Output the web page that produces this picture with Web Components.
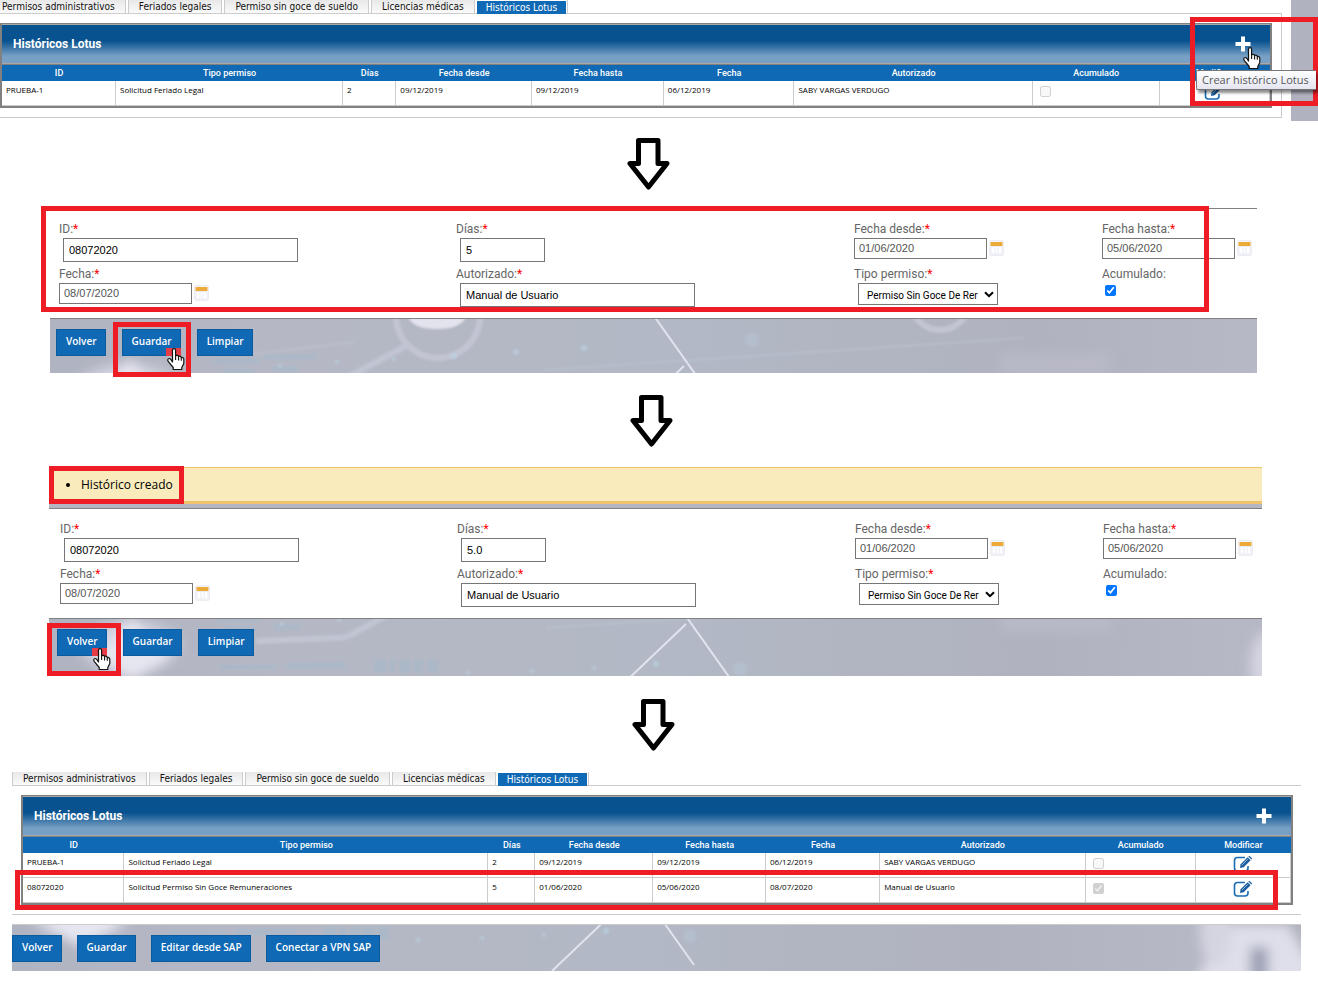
<!DOCTYPE html>
<html lang="es">
<head>
  <meta charset="utf-8">
  <title>Históricos Lotus</title>
  <style>
    body {
      margin: 0;
      background: #fff;
      color: #000;
      font-family: Roboto, "Open Sans", sans-serif;
      overflow-x: hidden;
    }
  </style>
</head>
<body>
  <list-screen clipped>
    <nav-tabs slot="tabs" clipped></nav-tabs>
    <history-table slot="table" layout="narrow"></history-table>
    <red-mark slot="overlay" style="--top: 17px; --right: 0px; --width: 118px; --height: 79px"></red-mark>
    <tool-tip slot="overlay">Crear histórico Lotus</tool-tip>
  </list-screen>

  <flow-arrow></flow-arrow>

  <form-screen days="5"></form-screen>

  <flow-arrow></flow-arrow>

  <form-screen days="5.0" saved></form-screen>

  <flow-arrow></flow-arrow>

  <list-screen>
    <nav-tabs slot="tabs"></nav-tabs>
    <history-table slot="table" layout="wide"></history-table>
    <action-bar slot="actions" view="list">
      <push-button>Volver</push-button>
      <push-button>Guardar</push-button>
      <push-button>Editar desde SAP</push-button>
      <push-button>Conectar a VPN SAP</push-button>
    </action-bar>
  </list-screen>

  <script>
    const records = [
      {
        id: "PRUEBA-1",
        type: "Solicitud Feriado Legal",
        days: "2",
        from: "09/12/2019",
        to: "09/12/2019",
        date: "06/12/2019",
        by: "SABY VARGAS VERDUGO",
        accumulated: false
      },
      {
        id: "08072020",
        type: "Solicitud Permiso Sin Goce Remuneraciones",
        days: "5",
        from: "01/06/2020",
        to: "05/06/2020",
        date: "08/07/2020",
        by: "Manual de Usuario",
        accumulated: true
      }
    ];

    // column widths in percent, per table layout
    const layouts = {
      narrow: { widths: [9, 17.9, 4.2, 10.7, 10.4, 10.3, 18.8, 10, 8.7], rows: 1 },
      wide: { widths: [8, 28.7, 3.7, 9.3, 8.9, 9, 16.2, 8.7, 7.5], rows: 2 }
    };

    const handIcon = `
      <svg width="19" height="24" viewBox="0 0 19 24" aria-hidden="true">
        <path d="M6.5 15V3.2C6.5 1 9.6 1 9.6 3.2V9C10.4 7.8 12.3 8.2 12.6 9.6C13.6 8.8 15.2 9.4 15.3 10.6C16.4 10 17.8 10.8 17.8 12.2V16.5L15.8 20.5V22.5H7.2V20.5L2.2 14.4C.8 12.2 2.8 10.6 4.6 12.2Z"
          fill="#fff" stroke="#111" stroke-width="1.2" stroke-linejoin="round"/>
        <path d="M9.6 9V13M12.6 10V13.4M15.3 11V13.8" stroke="#111" stroke-width="1.1"/>
      </svg>`;

    class RedMark extends HTMLElement {
      constructor() {
        super();
        this.attachShadow({ mode: "open" }).innerHTML = `
          <style>
            :host {
              display: block;
              position: absolute;
              top: var(--top);
              right: var(--right, auto);
              left: var(--left, auto);
              width: var(--width, auto);
              height: var(--height);
              border: 5px solid #ee1c24;
              pointer-events: none;
              z-index: 2;
            }
          </style>`;
      }
    }

    class ToolTip extends HTMLElement {
      constructor() {
        super();
        this.attachShadow({ mode: "open" }).innerHTML = `
          <style>
            :host {
              display: block;
              position: absolute;
              top: 70px;
              right: 2px;
              width: 114px;
              padding: 0 0 0 5px;
              border: 1px solid #767676;
              border-right: 0;
              border-radius: 2px 0 0 2px;
              background: linear-gradient(#fff, #e4e5f0);
              box-shadow: 2px 3px 3px rgba(0, 0, 0, .45);
              color: #575757;
              font: 11px/18px "Open Sans", sans-serif;
              white-space: nowrap;
              z-index: 3;
            }
            .hand {
              position: absolute;
              top: -25px;
              left: 45px;
              height: 24px;
            }
          </style>
          <slot></slot>
          <span class="hand">${handIcon}</span>`;
      }
    }

    class FlowArrow extends HTMLElement {
      constructor() {
        super();
        this.attachShadow({ mode: "open" }).innerHTML = `
          <style>
            :host {
              display: block;
              padding: 22px 16px 20px 0;
            }
            :host(:first-of-type) {
              padding: 17px 22px 18px 0;
            }
            :host(:last-of-type) {
              padding: 23px 12px 20px 0;
            }
            svg { display: block; margin: 0 auto; }
          </style>
          <svg width="43" height="52" viewBox="0 0 43 52" aria-hidden="true">
            <path d="M11.5 2.5H31V25.5H40L21.5 49 3 25.5H11.5Z" fill="#fff" stroke="#000" stroke-width="5" stroke-linejoin="round"/>
          </svg>`;
      }
    }

    class NavTabs extends HTMLElement {
      constructor() {
        super();
        const tabs = ["Permisos administrativos", "Feriados legales", "Permiso sin goce de sueldo", "Licencias médicas"];
        this.attachShadow({ mode: "open" }).innerHTML = `
          <style>
            :host { display: block; }
            nav {
              display: flex;
              gap: 2px;
              height: 13px;
              font: 10px/13px "DejaVu Sans Condensed", sans-serif;
            }
            a {
              padding: 0 10px;
              border: solid #ccc;
              border-width: 0 1px;
              background: linear-gradient(#e8e8e8, #fafafa);
              color: #111;
              text-decoration: none;
              white-space: nowrap;
            }
            :host([clipped]) nav > a:first-child {
              padding-left: 2px;
              border-left: 0;
            }
            .holder {
              padding: 1px 1px 0 0;
              border-right: 1px solid #ccc;
            }
            .active {
              display: block;
              padding: 0 9px;
              border: 0;
              background: #0f69b4;
              color: #fff;
            }
          </style>
          <nav>
            ${tabs.map(tab => `<a href="#">${tab}</a>`).join("")}
            <div class="holder"><a class="active" href="#" aria-current="page">Históricos Lotus</a></div>
          </nav>`;
      }
    }

    class HistoryTable extends HTMLElement {
      connectedCallback() {
        const { widths, rows } = layouts[this.getAttribute("layout")];
        const titles = ["ID", "Tipo permiso", "Días", "Fecha desde", "Fecha hasta", "Fecha", "Autorizado", "Acumulado", "Modificar"];
        this.attachShadow({ mode: "open" }).innerHTML = `
          <style>
            :host {
              display: block;
              position: relative;
              border: 2px solid #808080;
              border-top-width: 1px;
            }
            header {
              display: flex;
              align-items: center;
              justify-content: space-between;
              box-sizing: border-box;
              height: 40px;
              padding: 0 19px 0 11px;
              border: 1px solid #a9a9a9;
              border-width: 1px 0;
              background: linear-gradient(#08528f 42%, #78a0c5 82%);
              color: #fff;
            }
            h2 {
              margin: 0;
              font: bold 12px/16px Roboto, sans-serif;
            }
            button {
              padding: 0;
              border: 0;
              background: none;
              line-height: 0;
            }
            table {
              width: 100%;
              border-top: 1px solid #808080;
              border-spacing: 0;
              table-layout: fixed;
            }
            th {
              height: 16px;
              padding: 0;
              background: #0f69b4;
              color: #fff;
              font: 500 9px/16px Roboto, sans-serif;
            }
            td {
              box-sizing: border-box;
              height: 25px;
              padding: 4px 0 0 4px;
              border: solid #ccc;
              border-width: 0 1px 1px 0;
              vertical-align: top;
              font: 8px/10px "Open Sans", sans-serif;
              white-space: nowrap;
            }
            input {
              display: block;
              width: 11px;
              height: 11px;
              margin: 1px 0 0 3px;
            }
            .edit {
              padding: 2px 0 0;
              text-align: center;
            }
            .edit svg { display: block; margin: 0 auto; }
          </style>
          <header>
            <h2>Históricos Lotus</h2>
            <button type="button" aria-label="Crear histórico Lotus">
              <svg width="16" height="16" viewBox="0 0 16 16"><path d="M6 .5h4V6h5.500v4H10v5.500H6V10H.5V6H6Z" fill="#fff"/></svg>
            </button>
          </header>
          <table>
            <colgroup>${widths.map(width => `<col style="width: ${width}%">`).join("")}</colgroup>
            <thead><tr>${titles.map(title => `<th>${title}</th>`).join("")}</tr></thead>
            <tbody>${records.slice(0, rows).map(record => this.row(record)).join("")}</tbody>
          </table>
          ${rows > 1 ? `<red-mark style="--top: 74px; --left: -8px; --width: calc(100% - 15px); --height: 30px"></red-mark>` : ""}`;
      }

      row(record) {
        return `
          <tr>
            <td>${record.id}</td>
            <td>${record.type}</td>
            <td>${record.days}</td>
            <td>${record.from}</td>
            <td>${record.to}</td>
            <td>${record.date}</td>
            <td>${record.by}</td>
            <td><input type="checkbox" aria-label="Acumulado" disabled ${record.accumulated ? "checked" : ""}></td>
            <td class="edit">
              <button type="button" aria-label="Modificar">
                <svg width="20" height="18" viewBox="0 0 20 18" fill="none">
                  <path d="M12 2.500H4.500Q1.500 2.500 1.500 5.500V13Q1.500 16 4.500 16H12Q15 16 15 13V11" stroke="#1a6bb3" stroke-width="1.600"/>
                  <path d="M7 13 7.600 9.300 14.600 2.300 17.600 5.300 10.600 12.300Z" fill="#1a5c9e"/>
                  <path d="M15.300 1.600 16.300.8 19.200 3.600 18.300 4.600Z" fill="#1a5c9e"/>
                  <path d="M8.800 10.200 14.800 4.200" stroke="#b9d2ea" stroke-width=".8"/>
                </svg>
              </button>
            </td>
          </tr>`;
      }
    }

    class PushButton extends HTMLElement {
      constructor() {
        super();
        this.attachShadow({ mode: "open", delegatesFocus: true }).innerHTML = `
          <style>
            :host {
              display: block;
              position: relative;
            }
            button {
              display: block;
              height: 27px;
              padding: 0 8px 3px 9px;
              border: 1px solid #0b5a9e;
              background: #0f69b4;
              color: #fff;
              font: 600 10px/14px "Open Sans", sans-serif;
              white-space: nowrap;
            }
            .press {
              position: absolute;
              right: 0;
              bottom: 0;
              width: 15px;
              height: 8px;
              background: #e63c46;
              z-index: 3;
            }
            .press svg {
              position: absolute;
              top: -1px;
              left: 0;
            }
            red-mark {
              --top: -7px;
              --left: -9px;
              --width: calc(100% + 9px);
              --height: 45px;
            }
            :host([pressed="first"]) red-mark {
              --top: -6px;
              --left: -10px;
              --width: calc(100% + 14px);
              --height: 43px;
            }
          </style>
          <button type="button"><slot></slot></button>`;
      }

      connectedCallback() {
        if (this.hasAttribute("pressed")) {
          this.shadowRoot.innerHTML += `<span class="press">${handIcon}</span><red-mark></red-mark>`;
        }
      }
    }

    // One backdrop drawing seen through a different window in each bar;
    // its origin is the peak where the two long lines meet.
    const views = {
      form: "-634 -47 1207 54",
      saved: "-637 -5 1213 57",
      list: "-624 34 1289 46"
    };

    class ActionBar extends HTMLElement {
      connectedCallback() {
        const view = this.getAttribute("view");
        this.attachShadow({ mode: "open" }).innerHTML = `
          <style>
            :host {
              display: flex;
              align-items: flex-start;
              box-sizing: border-box;
              position: relative;
              gap: 16px;
              height: 55px;
              padding: 10px 6px 0;
              border-top: 1px solid #808080;
              background: #b3b6c3;
            }
            :host([view="saved"]) {
              height: 58px;
              padding-left: 8px;
            }
            :host([view="list"]) {
              gap: 15px;
              height: 47px;
              padding-left: 0;
              border-top-color: #ccc;
            }
            .scene {
              position: absolute;
              top: 0;
              left: 0;
              width: 100%;
              height: 100%;
            }
          </style>
          <svg class="scene" viewBox="${views[view]}" preserveAspectRatio="xMidYMid slice" aria-hidden="true">
            <defs>
              <linearGradient id="tone">
                <stop offset="0" stop-color="#aeb1bf"/>
                <stop offset=".2" stop-color="#b5b8c4"/>
                <stop offset=".5" stop-color="#b2b8c5"/>
                <stop offset=".75" stop-color="#b0b2bf"/>
                <stop offset=".9" stop-color="#b6b8c5"/>
                <stop offset="1" stop-color="#aeb0bc"/>
              </linearGradient>
              <filter id="soft" x="-50%" y="-50%" width="200%" height="200%"><feGaussianBlur stdDeviation="1"/></filter>
              <filter id="haze" x="-50%" y="-50%" width="200%" height="200%"><feGaussianBlur stdDeviation="6"/></filter>
            </defs>
            <rect x="-700" y="-100" width="1400" height="220" fill="url(#tone)"/>
            <g fill="none" filter="url(#soft)">
              <circle cx="-246" cy="-50" r="42" stroke="#c3c5d3" stroke-width="6"/>
              <circle cx="256" cy="-66" r="30" stroke="#c3c5d2" stroke-width="6"/>
              <path d="M-278-20-332 9Q-338 14-350 14L-430 17" stroke="#c1c4d2" stroke-width="6"/>
              <path d="M-430-12-330-24" stroke="#bcbfcc" stroke-width="2"/>
              <path d="M-140 4 340-28" stroke="#bcc7d3" stroke-width="1"/>
            </g>
            <path d="M-276-50H-218Q-222-37-247-37T-276-50Z" fill="#e3e3ed" filter="url(#soft)"/>
            <g filter="url(#haze)">
              <ellipse cx="-556" cy="22" rx="50" ry="24" fill="#d0d1df"/>
              <path d="M-592 36-554-8-516 36-554 56Z" fill="#e6e6f0"/>
              <path d="M556 100 586 34H652L690 100Z" fill="#dfdfea"/>
              <ellipse cx="580" cy="42" rx="16" ry="34" fill="#d5d4e1"/>
              <path d="M316-12H426V8H316Z" fill="#b9bac8"/>
              <path d="M614 56H632V90H614Z" fill="#9da1b5"/>
            </g>
            <g fill="#9fb9ce" opacity=".4" filter="url(#soft)">
              <path d="M-470-8h45v6h-45zM-420-12h52v6h-52zM-460 2h30v5h-30zM-412 0h26v6h-26z"/>
              <path d="M-466 40h56v6h-56zM-400 38h60v7h-60zM-312 36h12v12h-12zM-296 36h5v12h-5zM-286 36h10v12h-10zM-272 36h9v12h-9zM-258 36h10v12h-10z"/>
            </g>
            <g fill="#bcd5e6" opacity=".6" filter="url(#soft)">
              <circle cx="-404" cy="0" r="2"/><circle cx="-347" cy="-4" r="2"/><circle cx="-290" cy="-7" r="2"/>
              <circle cx="-230" cy="-10" r="3"/><circle cx="-168" cy="-14" r="3"/><circle cx="-100" cy="-18" r="3"/>
              <circle cx="-218" cy="49" r="2"/><circle cx="-154" cy="47" r="2"/><circle cx="-92" cy="44" r="2"/>
              <circle cx="-30" cy="40" r="3"/><circle cx="54" cy="45" r="7" opacity=".4"/><circle cx="68" cy="-26" r="7" opacity=".4"/>
            </g>
            <path d="M-30-50 58 74M0 0-84 80" fill="none" stroke="#e2e3ee" stroke-width="2"/>
          </svg>
          <slot></slot>`;
      }
    }

    class FormField extends HTMLElement {
      connectedCallback() {
        const kind = this.getAttribute("kind");
        const value = this.getAttribute("value");
        const controls = {
          text: `<input id="control" class="text" type="text" value="${value}">`,
          short: `<input id="control" class="text short" type="text" value="${value}">`,
          date: `<input id="control" class="date" type="text" value="${value}">
            <svg width="15" height="16" viewBox="0 0 15 16" aria-hidden="true">
              <rect x=".5" y=".5" width="14" height="15" rx="1.500" fill="#f6f7fa" stroke="#ececf2"/>
              <path d="M1.500 2h12V6h-12z" fill="#ecaa38"/>
              <path d="M2 6.500h11V14h-11zM6 7v7M9 7v7" fill="#fff" stroke="#e8ebf2"/>
            </svg>`,
          select: `<span class="pick">
              <select id="control"><option>${value}</option></select>
              <svg width="10" height="7" viewBox="0 0 10 7" aria-hidden="true"><path d="M1 1.200 5 5.200 9 1.200" fill="none" stroke="#000" stroke-width="2"/></svg>
            </span>`,
          check: `<input id="control" class="check" type="checkbox" checked>`
        };
        this.attachShadow({ mode: "open" }).innerHTML = `
          <style>
            :host {
              display: block;
              height: 45px;
            }
            label {
              display: block;
              height: 20px;
              color: #666;
              font-size: 12px;
              line-height: 22px;
            }
            i { color: #f00; font-style: normal; }
            .line { display: flex; gap: 2px; }
            input, select {
              box-sizing: border-box;
              margin: 0;
              border: 1px solid #767676;
              border-radius: 0;
              background: #fff;
              color: #000;
              font: 11px "Liberation Sans", sans-serif;
            }
            .text {
              width: 235px;
              height: 24px;
              margin-left: 4px;
              padding: 1px 5px;
            }
            .short { width: 85px; }
            .date {
              width: 133px;
              height: 21px;
              padding: 0 4px 2px;
              color: #555;
            }
            .line > svg { margin-top: 2px; }
            .pick {
              position: relative;
              margin-left: 4px;
            }
            select {
              appearance: none;
              width: 140px;
              height: 22px;
              padding: 2px 16px 0 8px;
              font: 10px Roboto, sans-serif;
            }
            .pick svg {
              position: absolute;
              top: 8px;
              right: 4px;
            }
            .check {
              width: 11px;
              height: 11px;
              margin: 2px 3px;
            }
          </style>
          <label for="control">${this.getAttribute("label")}:${kind === "check" ? "" : "<i>*</i>"}</label>
          <div class="line">${controls[kind]}</div>`;
      }
    }

    class FormScreen extends HTMLElement {
      connectedCallback() {
        const saved = this.hasAttribute("saved");
        this.attachShadow({ mode: "open" }).innerHTML = `
          <style>
            :host {
              display: block;
              margin: 0 61px 0 50px;
            }
            :host([saved]) {
              margin: 0 56px 0 49px;
            }
            .alert {
              position: relative;
              height: 33px;
              margin: 0 0 4px;
              padding: 0 0 0 32px;
              border: solid #efc36b;
              border-width: 1px 0 3px;
              background: #f9ebbb;
              font: 12px/33px "Open Sans", sans-serif;
            }
            .backdrop { background: #b3b6c3; }
            .fields {
              display: grid;
              grid-template-columns: 397fr 398fr 248fr 155fr;
              position: relative;
              padding: 9px 0 10px 9px;
              border-top: 1px solid #808080;
              background: #fff;
            }
            :host([saved]) .fields { padding: 9px 4px 10px 11px; }
          </style>
          <div class="backdrop">
            ${saved ? `<ul class="alert"><li>Histórico creado</li>
              <red-mark style="--top: -2px; --left: 0px; --width: 125px; --height: 28px"></red-mark></ul>` : ""}
            <div class="fields">
              <form-field kind="text" label="ID" value="08072020"></form-field>
              <form-field kind="short" label="Días" value="${this.getAttribute("days")}"></form-field>
              <form-field kind="date" label="Fecha desde" value="01/06/2020"></form-field>
              <form-field kind="date" label="Fecha hasta" value="05/06/2020"></form-field>
              <form-field kind="date" label="Fecha" value="08/07/2020"></form-field>
              <form-field kind="text" label="Autorizado" value="Manual de Usuario"></form-field>
              <form-field kind="select" label="Tipo permiso" value="Permiso Sin Goce De Rer"></form-field>
              <form-field kind="check" label="Acumulado"></form-field>
              ${saved ? "" : `<red-mark style="--top: -3px; --left: -9px; --width: calc(100% - 49px); --height: 96px"></red-mark>`}
            </div>
          </div>
          <action-bar view="${saved ? "saved" : "form"}">
            <push-button ${saved ? `pressed="first"` : ""}>Volver</push-button>
            <push-button ${saved ? "" : "pressed"}>Guardar</push-button>
            <push-button>Limpiar</push-button>
          </action-bar>`;
      }
    }

    class ListScreen extends HTMLElement {
      constructor() {
        super();
        this.attachShadow({ mode: "open" }).innerHTML = `
          <style>
            :host {
              display: block;
              position: relative;
              padding: 1px 17px 0 12px;
            }
            :host([clipped]) {
              padding: 0 36px 3px 0;
              background: linear-gradient(to left, #b0b2bf 27px, #fff 27px);
            }
            .panel {
              padding: 9px 8px 9px 9px;
              border: solid #ccc;
              border-width: 1px 0;
            }
            :host([clipped]) .panel {
              padding: 9px 9px 9px 0;
              border-right-width: 1px;
            }
            ::slotted(action-bar) { margin-top: 9px; }
          </style>
          <slot name="tabs"></slot>
          <div class="panel"><slot name="table"></slot></div>
          <slot name="actions"></slot>
          <slot name="overlay"></slot>`;
      }
    }

    customElements.define("red-mark", RedMark);
    customElements.define("tool-tip", ToolTip);
    customElements.define("flow-arrow", FlowArrow);
    customElements.define("nav-tabs", NavTabs);
    customElements.define("history-table", HistoryTable);
    customElements.define("push-button", PushButton);
    customElements.define("action-bar", ActionBar);
    customElements.define("form-field", FormField);
    customElements.define("form-screen", FormScreen);
    customElements.define("list-screen", ListScreen);
  </script>
</body>
</html>
